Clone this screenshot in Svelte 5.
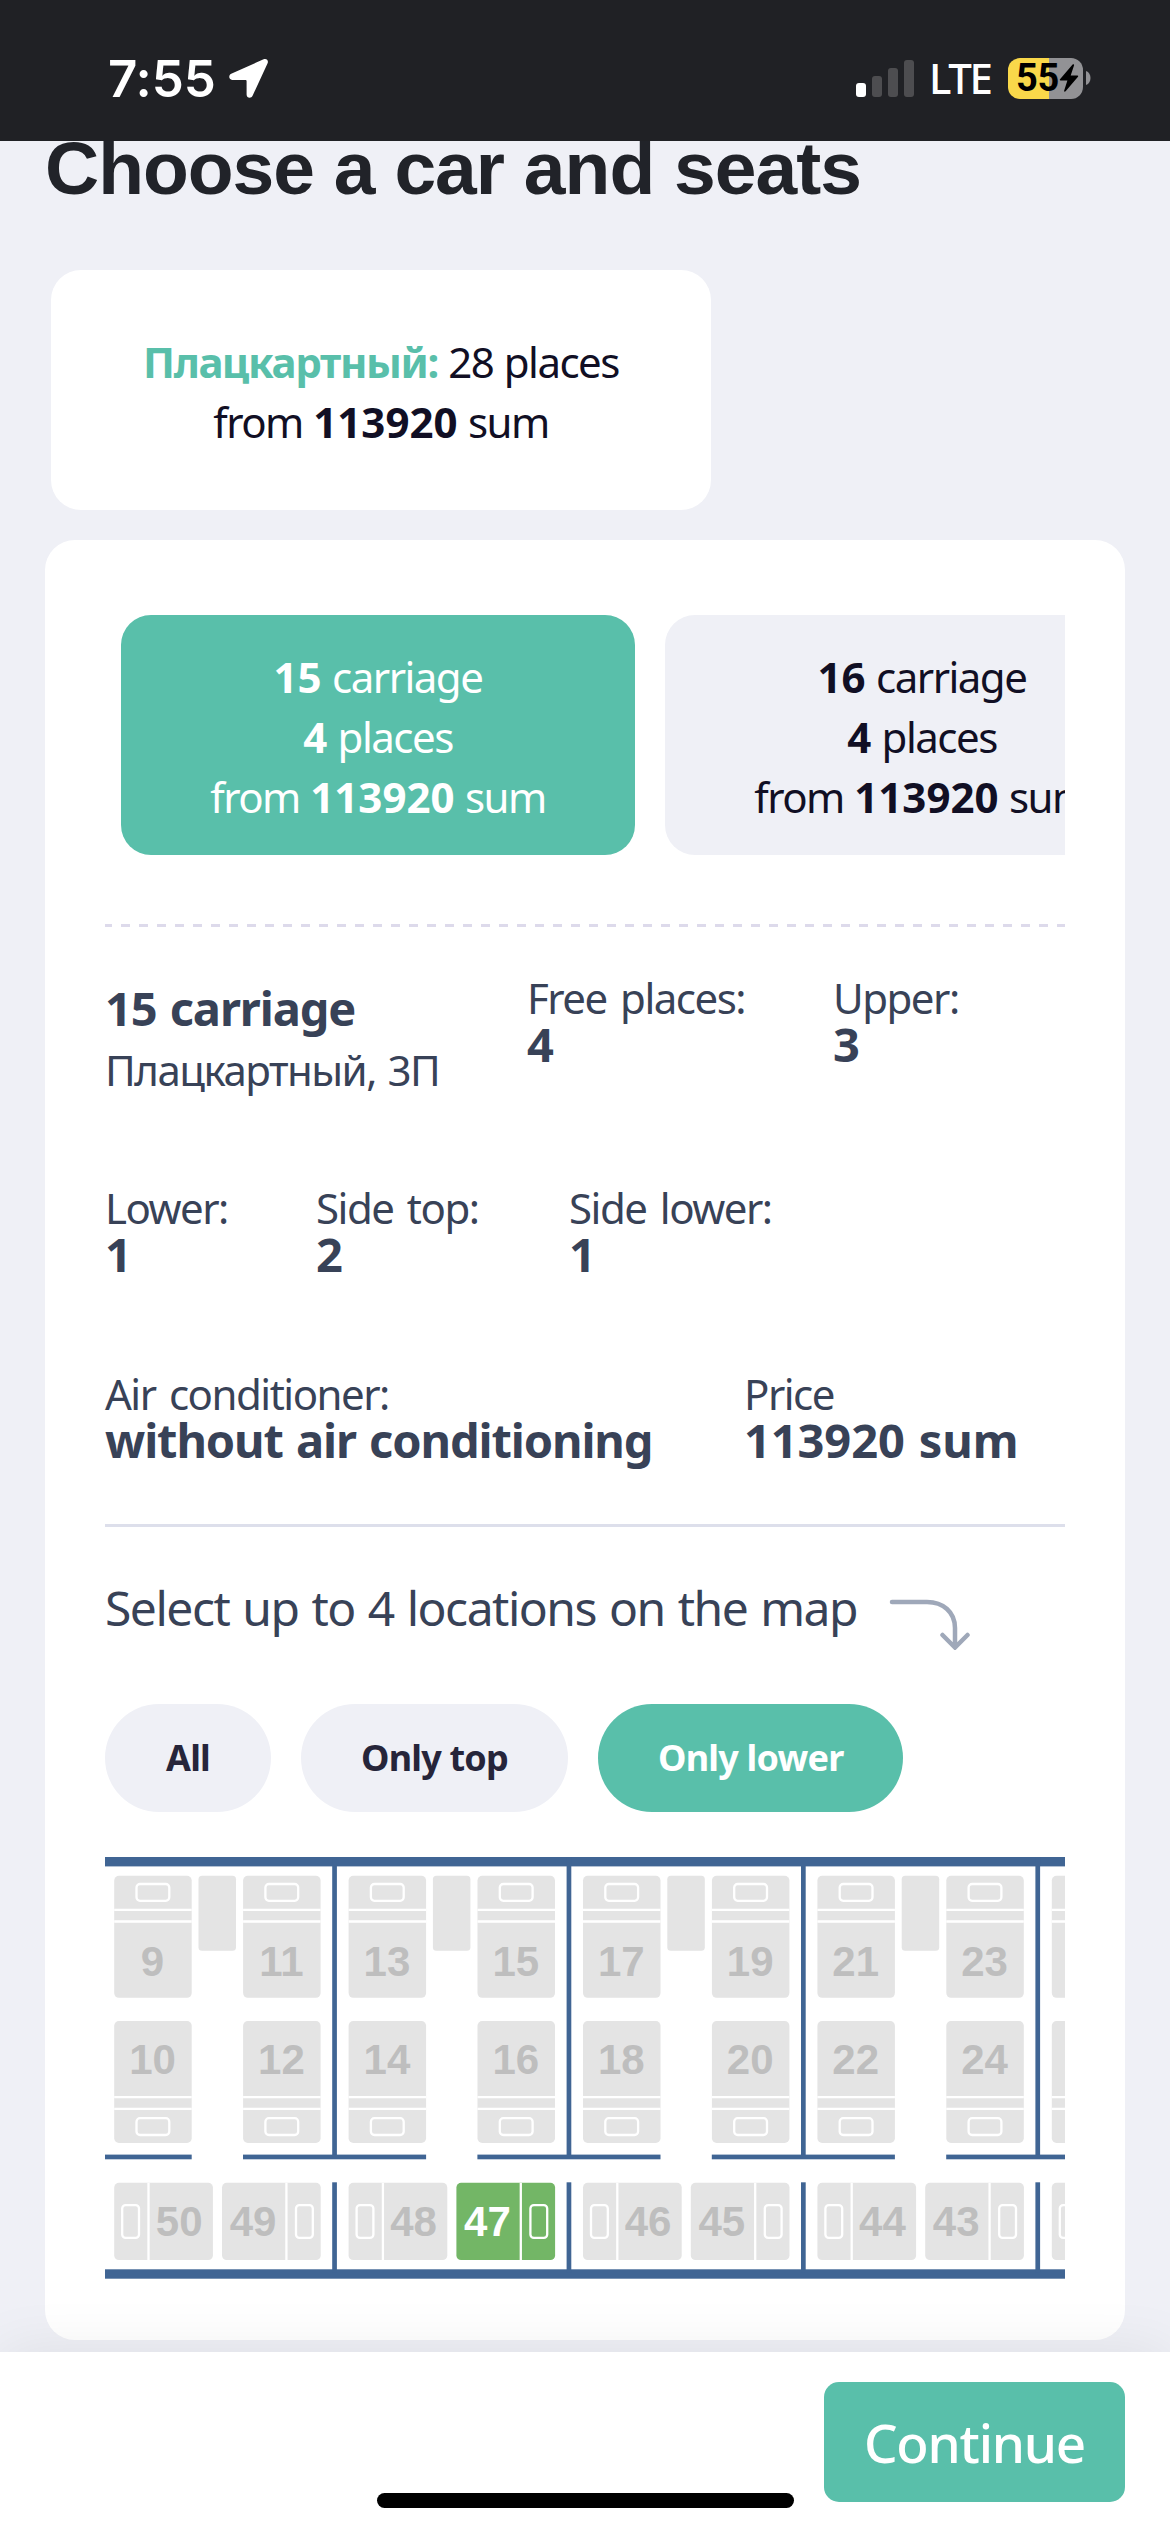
<script>
  let active = 15;
  let filter = "Only lower";

  const filters = ["All", "Only top", "Only lower"];

  const carriages = [
    { number: 15, places: 4, price: 113920 },
    { number: 16, places: 4, price: 113920 }
  ];

  const bars = [14, 21, 29, 37];

  // width of one compartment on the map
  const STEP = 234.4;

  const compartments = [
    { top: [9, 11], bottom: [10, 12], side: [50, 49] },
    { top: [13, 15], bottom: [14, 16], side: [48, 47] },
    { top: [17, 19], bottom: [18, 20], side: [46, 45] },
    { top: [21, 23], bottom: [22, 24], side: [44, 43] },
    { top: ["", ""], bottom: ["", ""], side: ["", ""] }
  ];

  const free = [47];
</script>

<div class="page">
  <div class="status">
    <div class="status-left">
      <span class="time">7:55</span>
      <svg class="location" width="40" height="40" viewBox="0 0 40 40">
        <path
          d="M34.6 1.3 2.200 15.800C-.8 17.200-.2 21.900 3.200 21.900H16.400C17.200 21.900 17.600 22.300 17.600 23.100V36.400C17.600 40.200 22.200 41 23.700 37.500L38.600 5.200C39.800 2.400 37.400 0 34.600 1.300Z"
        />
      </svg>
    </div>
    <div class="status-right">
      <div class="signal">
        {#each bars as h, i}
          <i class:on={i === 0} style="height: {h}px"></i>
        {/each}
      </div>
      <span class="lte">LTE</span>
      <div class="battery">
        <span>55</span>
        <svg width="20" height="28" viewBox="0 0 20 28">
          <path d="M13.6.6 1 15.2c-.5.7-.2 1.3.6 1.3h6.8L5.2 26.4c-.4 1.3.6 1.7 1.4.8L19 12.7c.5-.7.2-1.3-.6-1.3h-6.7L15 1.5C15.4.2 14.4-.3 13.6.6Z" />
        </svg>
      </div>
      <svg class="nub" width="5" height="14" viewBox="0 0 5 14">
        <path d="M0 0C6 2 6 12 0 14Z" />
      </svg>
    </div>
  </div>

  <h1>Choose a car and seats</h1>

  <div class="type">
    <p><b class="green">Плацкартный:</b> 28 places</p>
    <p>from <b>113920</b> sum</p>
  </div>

  <div class="card">
    <div class="carriages">
      {#each carriages as c}
        <div class="carriage" class:active={c.number === active}>
          <p><b>{c.number}</b> carriage</p>
          <p><b>{c.places}</b> places</p>
          <p>from <b>{c.price}</b> sum</p>
        </div>
      {/each}
    </div>

    <div class="dashes"></div>

    <div class="row first">
      <div class="name">
        <h2>15 carriage</h2>
        <p>Плацкартный, 3П</p>
      </div>
      <div class="item"><span>Free places:</span><b>4</b></div>
      <div class="item"><span>Upper:</span><b>3</b></div>
    </div>
    <div class="row second">
      <div class="item"><span>Lower:</span><b>1</b></div>
      <div class="item"><span>Side top:</span><b>2</b></div>
      <div class="item"><span>Side lower:</span><b>1</b></div>
    </div>
    <div class="row third">
      <div class="item"><span>Air conditioner:</span><b>without air conditioning</b></div>
      <div class="item"><span>Price</span><b class="price">113920 sum</b></div>
    </div>

    <div class="select">
      <span>Select up to 4 locations on the map</span>
      <svg width="84" height="54" viewBox="0 0 84 54">
        <path d="M3 6H38C54 6 66 16 66 32V50M53.500 39 66 51.500 78.500 39" />
      </svg>
    </div>

    <div class="filters">
      {#each filters as f}
        <button class:active={f === filter} on:click={() => (filter = f)}>{f}</button>
      {/each}
    </div>

    <svg class="map" width="960" height="422" viewBox="0 0 960 422">
      <rect class="wall" x="0" y="0" width="960" height="9.4" />
      <rect class="wall" x="0" y="412.300" width="960" height="9.4" />
      <rect class="wall" x="0" y="297.600" width="86.700" height="4.700" />
      {#each compartments as c, i}
        <g transform="translate({i * STEP} 0)">
          <rect class="wall" x="227.200" y="0" width="4.700" height="300" />
          <rect class="wall" x="227.200" y="325.300" width="4.700" height="90" />
          <rect class="wall" x="138" y="297.600" width="183.100" height="4.700" />
          <rect class="seat" x="93.500" y="18.800" width="37.500" height="75" rx="3.500" />

          {#each c.top as n, k}
            <g transform="translate({9.2 + k * 128.9} 18.8)">
              <rect class="seat" width="77.500" height="122" rx="4.700" />
              <path class="line" d="M0 34H77.500M0 45.700H77.500" />
              <rect class="line" x="22.300" y="8.200" width="32.800" height="16.800" rx="3.500" />
              <text x="38.300" y="100.300">{n}</text>
            </g>
          {/each}

          {#each c.bottom as n, k}
            <g transform="translate({9.2 + k * 128.9} 164)">
              <rect class="seat" width="77.500" height="122" rx="4.700" />
              <path class="line" d="M0 76.200H77.500M0 87.900H77.500" />
              <rect class="line" x="22.300" y="97.200" width="32.800" height="16.800" rx="3.500" />
              <text x="38.300" y="53.300">{n}</text>
            </g>
          {/each}

          {#each c.side as n, k}
            <g class:free={free.includes(n)} transform="translate({9.2 + k * 107.8} 325.8)">
              <rect class="seat" width="98.700" height="77.300" rx="4.700" />
              <path class="line" d={k ? "M64.400 0V77.300" : "M34.300 0V77.300"} />
              <rect class="line" x={k ? 74 : 8} y="22.300" width="16.800" height="32.800" rx="3.500" />
              <text x={k ? 31 : 65} y="53.700">{n}</text>
            </g>
          {/each}
        </g>
      {/each}
    </svg>
  </div>

  <div class="footer">
    <button>Continue</button>
    <div class="home"></div>
  </div>
</div>

<style>
  :global(body) {
    background: #eff0f6;
  }
  .page {
    position: relative;
    width: 1170px;
    height: 2532px;
    overflow: hidden;
    background: #eff0f6;
    color: #110f24;
    font-family: "Noto Sans", "Open Sans", sans-serif;
    font-size: 42px;
    letter-spacing: -1.5px;
    word-spacing: 2px;
  }
  p,
  h1,
  h2 {
    margin: 0;
  }
  button {
    border: none;
    padding: 0;
    font-family: inherit;
    letter-spacing: inherit;
  }

  .status {
    position: relative;
    z-index: 1;
    display: flex;
    justify-content: space-between;
    box-sizing: border-box;
    height: 141px;
    padding: 57px 79px 0 108px;
    background: #202125;
    color: white;
  }
  .status-left,
  .status-right {
    display: flex;
    align-items: center;
    height: 42px;
  }
  .time {
    width: 121px;
    font-family: Inter, sans-serif;
    font-size: 51px;
    font-weight: 600;
    letter-spacing: -0.1px;
  }
  .location {
    fill: white;
  }
  .signal {
    display: flex;
    align-items: flex-end;
    gap: 6px;
    height: 37px;
    margin-right: 15px;
  }
  .signal i {
    width: 10px;
    border-radius: 3px;
    background: #4d4d50;
  }
  .signal i.on {
    background: white;
  }
  .lte {
    width: 63px;
    margin-right: 16px;
    font-size: 42px;
    font-weight: 500;
    line-height: 42px;
    letter-spacing: -2.4px;
  }
  .battery {
    display: flex;
    align-items: center;
    box-sizing: border-box;
    width: 75px;
    height: 41px;
    padding-left: 8px;
    border-radius: 12px;
    background: linear-gradient(to right, #f9d84a 41px, #929295 41px);
    color: black;
  }
  .battery span {
    width: 43px;
    font-family: Roboto, sans-serif;
    font-size: 38px;
    font-weight: 700;
    letter-spacing: -0.4px;
  }
  .nub {
    margin-left: 3px;
    fill: #929295;
  }

  h1 {
    margin: -16px 0 0 45px;
    color: #212329;
    font-family: "Liberation Sans", Arial, sans-serif;
    font-size: 75px;
    line-height: 86px;
    letter-spacing: -1px;
    word-spacing: 0;
  }

  .type,
  .carriage {
    box-sizing: border-box;
    height: 240px;
    border-radius: 30px;
    line-height: 60px;
    text-align: center;
  }
  .type b,
  .carriage b {
    letter-spacing: 0;
  }
  .type p,
  .carriage p {
    word-spacing: 1px;
  }
  .type {
    width: 660px;
    margin: 59px 0 30px 51px;
    padding-top: 62px;
    background: white;
  }
  .type .green {
    color: #59bfaa;
    letter-spacing: -1.4px;
  }

  .card {
    box-sizing: border-box;
    width: 1080px;
    height: 1800px;
    margin-left: 45px;
    padding: 75px 60px 0;
    border-radius: 30px;
    background: white;
    color: #384257;
  }
  .carriages {
    display: flex;
    gap: 30px;
    padding-left: 16px;
    overflow: hidden;
  }
  .carriage {
    flex: none;
    width: 514px;
    padding-top: 32px;
    background: #eff0f6;
    color: #110f24;
  }
  .carriage.active {
    background: #59bfaa;
    color: white;
  }
  .dashes {
    height: 3px;
    margin-top: 69px;
    background: repeating-linear-gradient(
      to right,
      #dddaeb 0 9px,
      transparent 9px 18px
    );
    background-position: -2px 0;
  }

  .row {
    display: grid;
  }
  .first {
    height: 126px;
    margin-top: 47px;
    grid-template-columns: 422px 306px auto;
  }
  .second {
    height: 92px;
    margin-top: 84px;
    grid-template-columns: 211px 253px auto;
  }
  .third {
    height: 154px;
    margin-top: 94px;
    grid-template-columns: 639px auto;
    border-bottom: 3px solid #dddfeb;
  }
  .name {
    padding-top: 2px;
  }
  .name h2 {
    font-size: 47px;
    line-height: 64px;
    letter-spacing: -1.1px;
  }
  .name p {
    line-height: 60px;
  }
  .item span,
  .item b {
    display: block;
    line-height: 48px;
  }
  .item span {
    word-spacing: 4px;
  }
  .item b {
    font-size: 47px;
    line-height: 44px;
    letter-spacing: -1.1px;
  }
  .item .price {
    letter-spacing: -0.1px;
  }

  .select {
    display: flex;
    align-items: flex-start;
    height: 60px;
    padding-top: 51px;
    font-size: 48px;
    line-height: 60px;
  }
  .select span {
    width: 784px;
    white-space: nowrap;
  }
  .select svg {
    flex: none;
    margin-top: 18px;
    fill: none;
    stroke: #9fa8b9;
    stroke-width: 4.5px;
    stroke-linecap: round;
  }

  .filters {
    display: flex;
    gap: 30px;
    margin-top: 66px;
  }
  .filters button {
    min-width: 166px;
    height: 108px;
    padding: 0 60px 2px;
    border-radius: 54px;
    background: #eff0f6;
    color: #26253a;
    font-size: 36px;
    font-weight: bold;
    letter-spacing: -0.8px;
  }
  .filters button.active {
    background: #59bfaa;
    color: white;
  }

  .map {
    display: block;
    margin-top: 45px;
  }
  .wall {
    fill: #406594;
  }
  .seat {
    fill: #e4e4e4;
  }
  .line {
    fill: none;
    stroke: white;
    stroke-width: 2.3px;
  }
  .map text {
    fill: #bebebe;
    font: bold 42px "Liberation Sans", Arial, sans-serif;
    letter-spacing: 0;
    text-anchor: middle;
  }
  .free .seat {
    fill: #73b666;
  }
  .map .free text {
    fill: white;
  }

  .footer {
    position: absolute;
    left: 0;
    bottom: 0;
    display: flex;
    justify-content: flex-end;
    box-sizing: border-box;
    width: 100%;
    height: 180px;
    padding: 30px 45px;
    background: white;
    box-shadow: 0 0 60px rgba(0, 0, 0, 0.08);
  }
  .footer button {
    width: 301px;
    height: 120px;
    border-radius: 15px;
    background: #59bfaa;
    color: white;
    font-size: 53px;
    font-weight: 500;
    letter-spacing: -1.2px;
  }
  .home {
    position: absolute;
    left: 377px;
    bottom: 24px;
    width: 417px;
    height: 15px;
    border-radius: 8px;
    background: black;
  }
</style>
